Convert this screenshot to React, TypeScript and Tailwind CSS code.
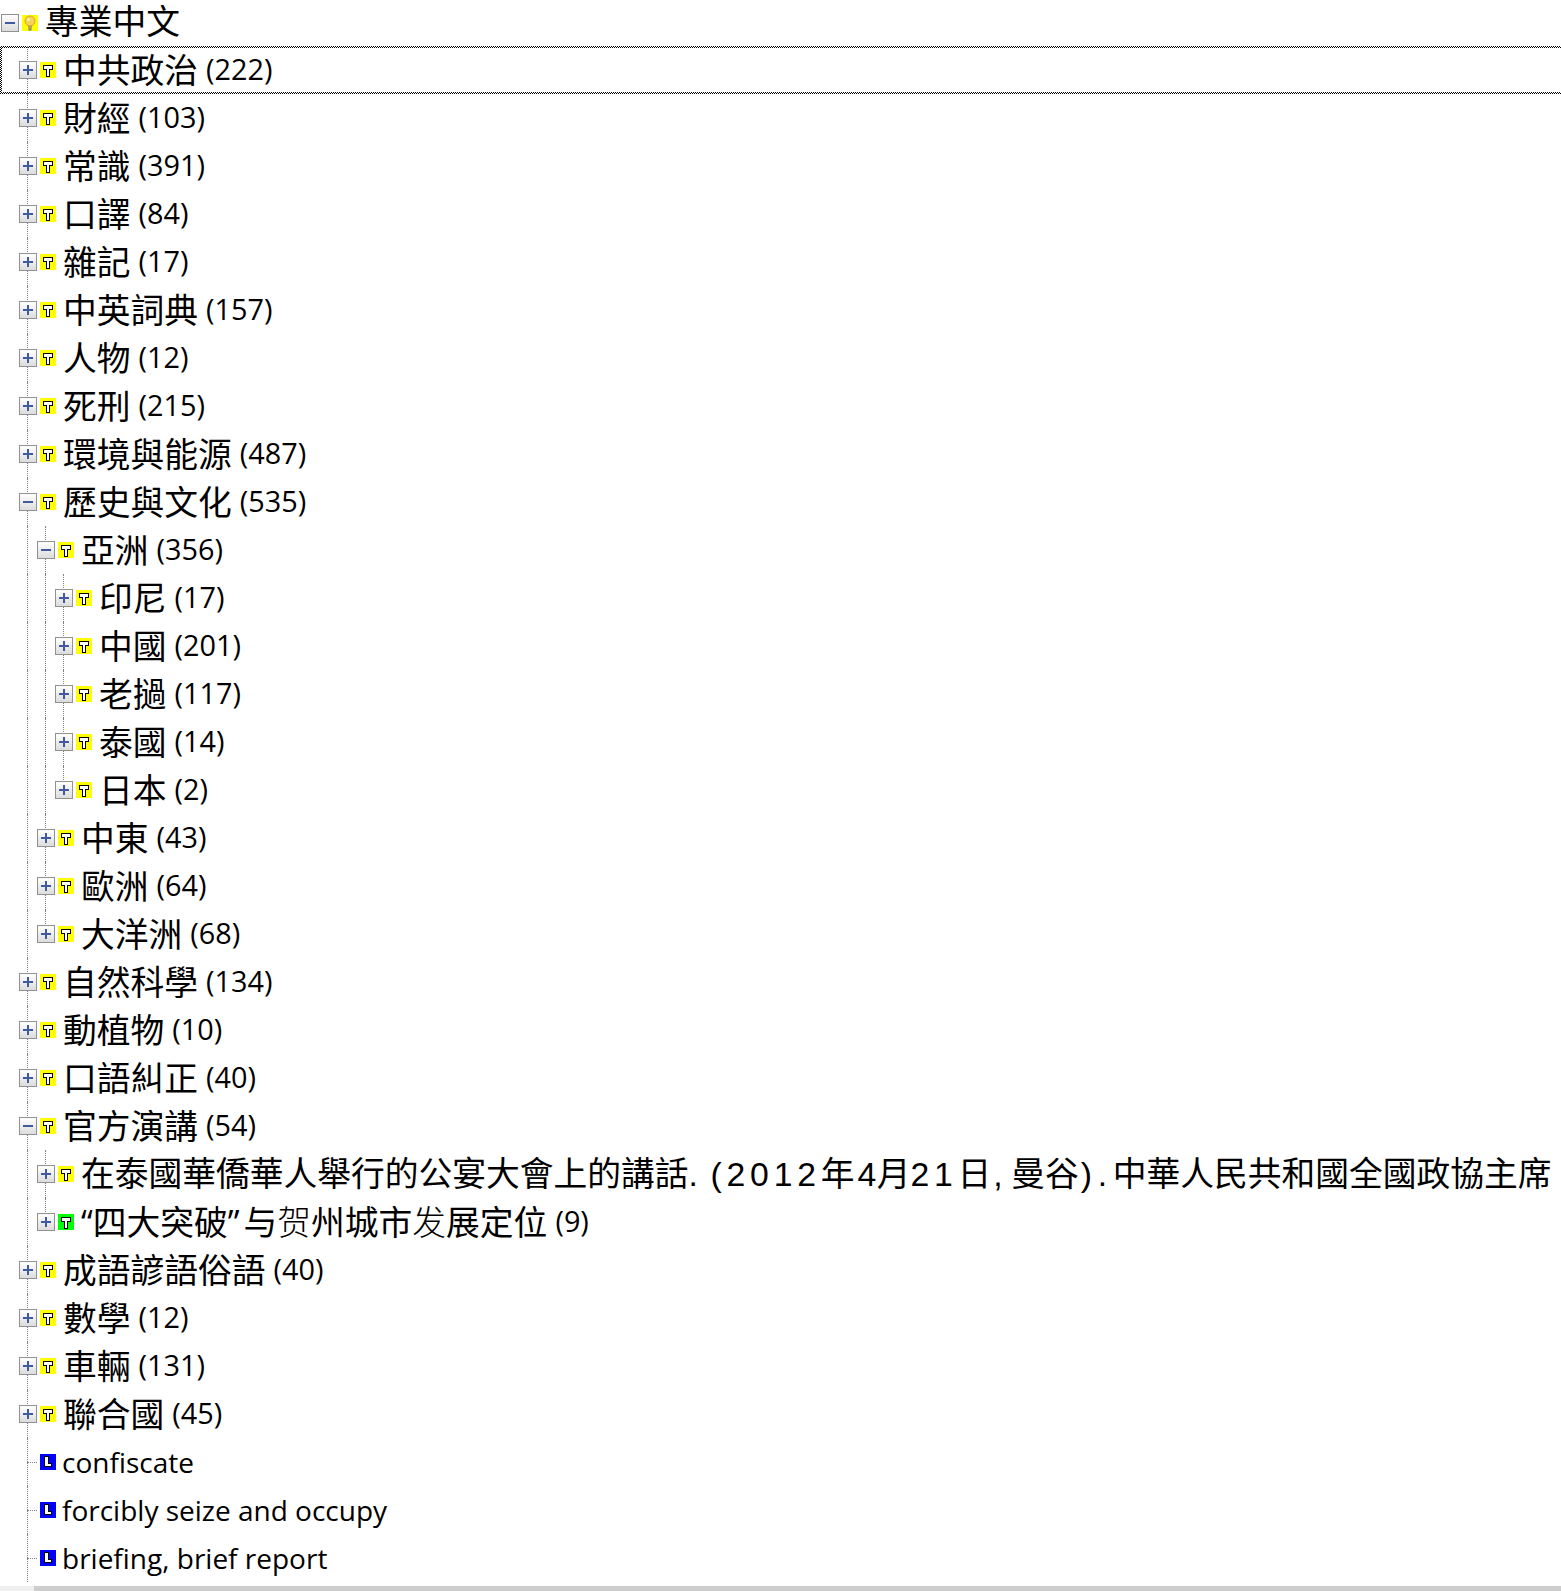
import { Fragment } from 'react';
import type { ReactNode } from 'react';

type Node = {
    label: string;
    count?: number;
    kind?: 'topic' | 'green' | 'leaf';
    open?: boolean;
    text?: ReactNode;
    children?: Node[];
};

const t = (label: string, count: number): Node => ({ label, count, open: false });

const LATIN = "font-['Liberation_Sans',sans-serif]";

// this title mixes fonts in the original, digits and punctuation sit in wide cells
const speechTitle = (
    <>
        在泰國華僑華人舉行的公宴大會上的講話
        <span className={`${LATIN} inline-block w-[15px]`}>.</span>
        <span className={`${LATIN} inline-block w-[23px] pl-[7px]`}>(</span>
        <span className={`${LATIN} tracking-[4.8px]`}>2012</span>
        年
        <span className={`${LATIN} ml-[3px] tracking-[0.3px]`}>4</span>
        月
        <span className={`${LATIN} tracking-[4.8px]`}>21</span>
        日
        <span className={`${LATIN} inline-block w-[20px] pl-[2px]`}>,</span>
        曼谷
        <span className={`${LATIN} inline-block w-[19px] pl-[2px]`}>)</span>
        <span className={`${LATIN} inline-block w-[15px]`}>.</span>
        中華人民共和國全國政協主席
    </>
);

const simplifiedTitle = (
    <>
        “四大突破”<span className="ml-[4px]">与</span><span className="font-extralight">贺</span>州城市<span className="font-extralight">发</span>展定位
    </>
);

const tree: Node[] = [
    t('中共政治', 222),
    t('財經', 103),
    t('常識', 391),
    t('口譯', 84),
    t('雜記', 17),
    t('中英詞典', 157),
    t('人物', 12),
    t('死刑', 215),
    t('環境與能源', 487),
    {
        label: '歷史與文化',
        count: 535,
        open: true,
        children: [
            {
                label: '亞洲',
                count: 356,
                open: true,
                children: [t('印尼', 17), t('中國', 201), t('老撾', 117), t('泰國', 14), t('日本', 2)]
            },
            t('中東', 43),
            t('歐洲', 64),
            t('大洋洲', 68)
        ]
    },
    t('自然科學', 134),
    t('動植物', 10),
    t('口語糾正', 40),
    {
        label: '官方演講',
        count: 54,
        open: true,
        children: [
            { label: 'speech', text: speechTitle, open: false },
            { label: 'four', text: simplifiedTitle, count: 9, kind: 'green', open: false }
        ]
    },
    t('成語諺語俗語', 40),
    t('數學', 12),
    t('車輛', 131),
    t('聯合國', 45),
    { label: 'confiscate', kind: 'leaf' },
    { label: 'forcibly seize and occupy', kind: 'leaf' },
    { label: 'briefing, brief report', kind: 'leaf' }
];

const FOCUS = 'absolute bg-[repeating-conic-gradient(#000_0%_25%,#fff_0%_50%)] bg-[length:2px_2px]';

const Toggle = ({ open }: { open: boolean }) => (
    <span className="relative z-10 flex h-[18px] w-[18px] items-center justify-center border border-[#919191] bg-gradient-to-b from-white to-[#dcdcdc]">
        <svg width="10" height="10" viewBox="0 0 10 10">
            <rect x="0" y="4" width="10" height="2" fill="#3f5a9e" />
            {!open && <rect x="4" y="0" width="2" height="10" fill="#3f5a9e" />}
        </svg>
    </span>
);

const TopicIcon = ({ kind }: { kind?: Node['kind'] }) => {
    if (kind === 'leaf') {
        return (
            <svg width="16" height="16" viewBox="0 0 16 16" className="shrink-0" shapeRendering="crispEdges">
                <rect width="16" height="16" fill="#0000ff" />
                <path d="M4.5 2.5h4v7h3v3h-7z" fill="#fff" stroke="#000" />
            </svg>
        );
    }
    return (
        <svg width="16" height="16" viewBox="0 0 16 16" className="shrink-0" shapeRendering="crispEdges">
            <rect width="16" height="16" fill={kind === 'green' ? '#00ff00' : '#ffff00'} />
            <path d="M3.5 3.5h9v4h-3v7h-3v-7h-3z" fill="#fff" stroke="#000" />
        </svg>
    );
};

const BulbIcon = () => (
    <svg width="16" height="16" viewBox="0 0 16 16" className="shrink-0">
        <rect width="16" height="16" fill="#ffff00" />
        <circle cx="8" cy="6" r="5" fill="#f6d25a" stroke="#d9a520" />
        <path d="M6 10.5h4v3H6z" fill="#b9a35a" />
        <path d="M6.5 13.5h3v2h-3z" fill="#7b7b7b" />
        <circle cx="6.5" cy="4.5" r="1.5" fill="#fff6c0" />
    </svg>
);

const Label = ({ node }: { node: Node }) => (
    <span className="ml-[7px] flex items-center whitespace-nowrap text-[33.75px] leading-none text-black">
        {node.kind === 'leaf' ? (
            <span className="-ml-[1px] pb-[1px] text-[28px]">{node.label}</span>
        ) : (
            <span className="pt-[1px]">{node.text ?? node.label}</span>
        )}
        {!!node.count && <span className="ml-[8px] pb-[1px] text-[28.8px]">({node.count})</span>}
    </span>
);

// guides: one flag per level, true when that level's line keeps going down
const Row = ({ node, guides, last }: { node: Node; guides: boolean[]; last: boolean }) => {
    const leaf = node.kind === 'leaf';
    const selected = node.label === '中共政治';
    return (
        <Fragment>
            <div className="relative flex h-12 w-[1561px] items-stretch overflow-hidden pl-[1px]">
                {selected && (
                    <>
                        <span className={`${FOCUS} left-0 right-0 top-0 h-[2px]`} />
                        <span className={`${FOCUS} bottom-0 left-0 right-0 h-[2px]`} />
                        <span className={`${FOCUS} bottom-0 left-0 top-0 w-[2px]`} />
                    </>
                )}
                {guides.map((on, i) => (
                    <span key={i} className="relative w-[18px] shrink-0">
                        {on && <span className="absolute bottom-0 left-2 top-0 border-l border-dotted border-[#808080]" />}
                    </span>
                ))}
                <span className="relative flex w-[18px] shrink-0 items-center justify-center">
                    <span className={`absolute left-2 top-0 border-l border-dotted border-[#808080] ${last ? 'bottom-1/2' : 'bottom-0'}`} />
                    {leaf ? (
                        <span className="absolute left-2 top-1/2 w-[10px] border-t border-dotted border-[#808080]" />
                    ) : (
                        <Toggle open={!!node.open} />
                    )}
                </span>
                <span className="ml-[3px] flex shrink-0 items-center">
                    <TopicIcon kind={node.kind} />
                </span>
                <Label node={node} />
            </div>
            {node.open &&
                node.children?.map((child, i) => (
                    <Row
                        key={child.label}
                        node={child}
                        guides={[...guides, !last]}
                        last={i === node.children!.length - 1}
                    />
                ))}
        </Fragment>
    );
};

export default function App() {
    return (
        <div className="flex h-[1591px] w-[1561px] flex-col overflow-hidden bg-white font-['Open_Sans','Noto_Sans_CJK_SC',sans-serif]">
            <div className="min-h-0 flex-1 overflow-hidden">
                <div className="flex h-[46px] items-center pl-[1px]">
                    <Toggle open />
                    <span className="ml-[3px]">
                        <BulbIcon />
                    </span>
                    <span className="ml-[7px] pb-[4px] text-[33.75px] leading-[42px] text-black">專業中文</span>
                </div>
                {tree.map(node => (
                    <Row key={node.label} node={node} guides={[false]} last={false} />
                ))}
            </div>
            <div className="flex h-[5px] shrink-0 bg-[#f0f0f0]">
                <div className="ml-[34px] flex-1 bg-[#cdcdcd]" />
            </div>
        </div>
    );
}
